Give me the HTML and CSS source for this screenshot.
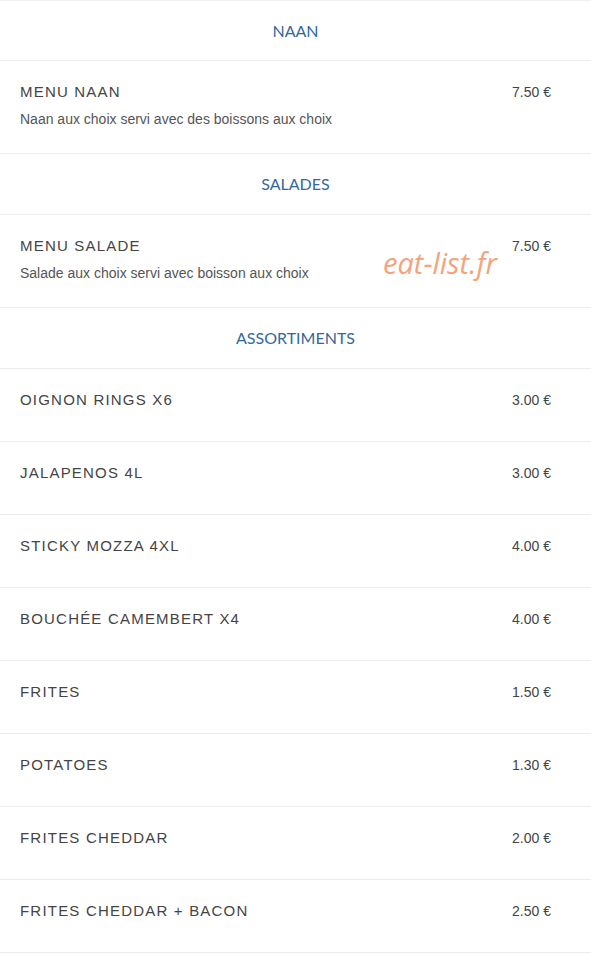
FILE: index.html
```html
<!DOCTYPE html>
<html lang="fr">
<head>
    <meta charset="UTF-8">
    <meta name="viewport" content="width=device-width, initial-scale=1.0">
    <title>Carte</title>
    <link rel="stylesheet" href="styles.css">
</head>
<body>

<div class="menu">
    <div class="category first">NAAN</div>
    <div class="item">
        <div class="item-info">
            <div class="item-name">MENU NAAN</div>
            <div class="item-desc">Naan aux choix servi avec des boissons aux choix</div>
        </div>
        <div class="item-price">7.50 €</div>
    </div>

    <div class="category">SALADES</div>
    <div class="item">
        <div class="item-info">
            <div class="item-name">MENU SALADE</div>
            <div class="item-desc">Salade aux choix servi avec boisson aux choix</div>
        </div>
        <div class="item-price">7.50 €</div>
        <span class="watermark">eat-list.fr</span>
    </div>

    <div class="category">ASSORTIMENTS</div>
    <div class="item">
        <div class="item-info"><div class="item-name">OIGNON RINGS X6</div></div>
        <div class="item-price">3.00 €</div>
    </div>
    <div class="item">
        <div class="item-info"><div class="item-name">JALAPENOS 4L</div></div>
        <div class="item-price">3.00 €</div>
    </div>
    <div class="item">
        <div class="item-info"><div class="item-name">STICKY MOZZA 4XL</div></div>
        <div class="item-price">4.00 €</div>
    </div>
    <div class="item">
        <div class="item-info"><div class="item-name">BOUCHÉE CAMEMBERT X4</div></div>
        <div class="item-price">4.00 €</div>
    </div>
    <div class="item">
        <div class="item-info"><div class="item-name">FRITES</div></div>
        <div class="item-price">1.50 €</div>
    </div>
    <div class="item">
        <div class="item-info"><div class="item-name">POTATOES</div></div>
        <div class="item-price">1.30 €</div>
    </div>
    <div class="item">
        <div class="item-info"><div class="item-name">FRITES CHEDDAR</div></div>
        <div class="item-price">2.00 €</div>
    </div>
    <div class="item">
        <div class="item-info"><div class="item-name">FRITES CHEDDAR + BACON</div></div>
        <div class="item-price">2.50 €</div>
    </div>
</div>

</body>
</html>
```

FILE: styles.css
```css
body {
    margin: 0;
    background-color: #fff;
    font-family: "Liberation Sans", Arial, sans-serif;
    color: #333;
}

.menu {
    width: 591px;
}

.category {
    padding: 20px 0;
    line-height: 20px;
    text-align: center;
    font-family: Lato, "Liberation Sans", sans-serif;
    font-size: 16px;
    color: #33699a;
    border-bottom: 1px solid #ededed;
}
.category.first {
    padding-bottom: 19px;
    border-top: 1px solid #f2f2f2;
}

.item {
    position: relative;
    display: flex;
    justify-content: space-between;
    align-items: flex-start;
    box-sizing: border-box;
    min-height: 73px;
    padding: 22px 40px 25px 20px;
    border-bottom: 1px solid #ededed;
}
.item-name {
    font-size: 15px;
    line-height: 18px;
    letter-spacing: 1.2px;
    color: #444;
}
.item-desc {
    margin-top: 9px;
    font-size: 14px;
    line-height: 18px;
    color: #555;
}
.item-price {
    font-size: 14px;
    line-height: 18px;
    color: #444;
}

.watermark {
    position: absolute;
    left: 383px;
    top: 28px;
    font-family: "Open Sans", sans-serif;
    font-style: italic;
    font-size: 29px;
    line-height: 40px;
    color: #f4a47c;
}
```
